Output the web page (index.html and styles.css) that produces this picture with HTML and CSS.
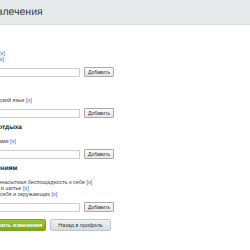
FILE: index.html
```html
<!DOCTYPE html>
<html lang="ru">
<head>
<meta charset="utf-8">
<link rel="stylesheet" href="styles.css">
</head>
<body>
<div class="page">
  <div class="head"><h1 class="title">Увлечения</h1></div>
  <div class="content">
    <div class="sec">
      <div class="sec-title">Хобби</div>
      <ul class="items">
        <li>Музыка <a class="del">[x]</a></li>
        <li>Футбол <a class="del">[x]</a></li>
      </ul>
      <div class="row"><input class="field" type="text"><button class="add">Добавить</button></div>
    </div>
    <div class="sec">
      <div class="sec-title">Языки</div>
      <ul class="items">
        <li>Французский язык <a class="del">[x]</a></li>
      </ul>
      <div class="row"><input class="field" type="text"><button class="add">Добавить</button></div>
    </div>
    <div class="sec">
      <div class="sec-title">Виды отдыха</div>
      <ul class="items">
        <li>Под водами <a class="del">[x]</a></li>
      </ul>
      <div class="row"><input class="field" type="text"><button class="add">Добавить</button></div>
    </div>
    <div class="sec">
      <div class="sec-title">По мнениям</div>
      <ul class="items">
        <li>Очень ненасытная беспощадность к себе <a class="del">[x]</a></li>
        <li>Вязание и шитье <a class="del">[x]</a></li>
        <li>Критику себя и окружающих <a class="del">[x]</a></li>
      </ul>
      <div class="row"><input class="field" type="text"><button class="add">Добавить</button></div>
    </div>
    <div class="actions">
      <button class="btn save">Сохранить изменения</button>
      <button class="btn back">Назад в профиль</button>
    </div>
  </div>
</div>
</body>
</html>
```
FILE: styles.css
```css
html, body { margin: 0; padding: 0; background: #fff; }
body { font-family: "Liberation Sans", Arial, sans-serif; color: #333; overflow: hidden; text-rendering: geometricPrecision; }
.page { margin-left: -22px; width: 300px; }
.head {
  background: #e6eaea;
  border-bottom: 1px solid #d6dcdc;
  height: 24px;
  display: flex;
  align-items: center;
  padding-left: 13px;
}
.title { margin: 0; font-size: 10.5px; font-weight: normal; color: #3a3a3a; }
.content { padding-top: 10px; }
.sec { margin-bottom: 5px; }
.sec-title { font-size: 6.5px; font-weight: bold; color: #222; height: 10px; line-height: 10px; margin-bottom: 6px; }
.items { list-style: none; margin: 0 0 4px; padding: 0; font-size: 5.5px; line-height: 6px; color: #444; white-space: nowrap; }
.del { color: #3355aa; }
.row { display: flex; align-items: center; gap: 4px; }
.field { box-sizing: border-box; width: 102px; height: 9px; margin: 0; padding: 0; border: 1px solid #cfcfcf; background: #fff; }
.add {
  box-sizing: border-box; height: 10px; width: 30px; padding: 0; margin: 0;
  font: 5px "Liberation Sans", Arial, sans-serif; color: #333; white-space: nowrap;
  background: linear-gradient(#fbfbfb, #e6e6e6); border: 1px solid #a9a9a9; border-radius: 1px;
}
.actions { display: flex; gap: 4px; margin-top: 7px; }
.btn {
  box-sizing: border-box; height: 12px; padding: 0; margin: 0; white-space: nowrap;
  font: 5.5px "Liberation Sans", Arial, sans-serif; border-radius: 2px;
}
.save { width: 68px; color: #fff; font-weight: bold; background: linear-gradient(#9cc734, #7aaa18); border: 1px solid #79a51c; }
.back { width: 61px; color: #333; background: linear-gradient(#eef2f4, #d4dde2); border: 1px solid #bcc6cb; }
```
